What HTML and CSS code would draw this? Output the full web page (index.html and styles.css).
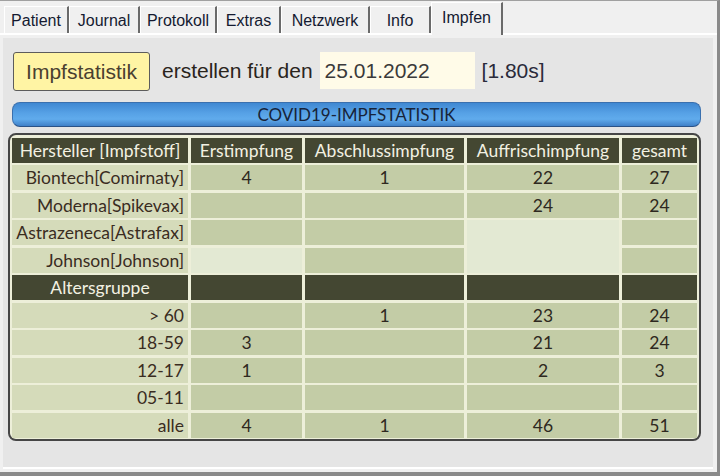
FILE: index.html
```html
<!DOCTYPE html>
<html lang="de">
<head>
<meta charset="utf-8">
<title>Impfen</title>
<link rel="stylesheet" href="styles.css">
</head>
<body>
<div class="window">
  <div class="tabbar">
    <div class="tab w-patient">Patient</div>
    <div class="tab w-journal">Journal</div>
    <div class="tab w-protokoll">Protokoll</div>
    <div class="tab w-extras">Extras</div>
    <div class="tab w-netzwerk">Netzwerk</div>
    <div class="tab w-info">Info</div>
    <div class="tab tab-active w-impfen">Impfen</div>
  </div>
  <div class="page">
    <div class="panel">
      <div class="toolbar">
        <div class="btn">Impfstatistik</div>
        <div class="label">erstellen für den</div>
        <div class="date">25.01.2022</div>
        <div class="time">[1.80s]</div>
      </div>
      <div class="titlebar">COVID19-IMPFSTATISTIK</div>
      <div class="frame">
        <div class="grid">
          <div class="c h">Hersteller [Impfstoff]</div>
          <div class="c h">Erstimpfung</div>
          <div class="c h">Abschlussimpfung</div>
          <div class="c h">Auffrischimpfung</div>
          <div class="c h">gesamt</div>

          <div class="c l">Biontech[Comirnaty]</div>
          <div class="c d">4</div>
          <div class="c d">1</div>
          <div class="c d">22</div>
          <div class="c d">27</div>

          <div class="c l">Moderna[Spikevax]</div>
          <div class="c d"></div>
          <div class="c d"></div>
          <div class="c d">24</div>
          <div class="c d">24</div>

          <div class="c l">Astrazeneca[Astrafax]</div>
          <div class="c d"></div>
          <div class="c d"></div>
          <div class="c e span2"></div>
          <div class="c d"></div>

          <div class="c l">Johnson[Johnson]</div>
          <div class="c e"></div>
          <div class="c d"></div>
          <div class="c d"></div>

          <div class="c h">Altersgruppe</div>
          <div class="c h"></div>
          <div class="c h"></div>
          <div class="c h"></div>
          <div class="c h"></div>

          <div class="c l">&gt; 60</div>
          <div class="c d"></div>
          <div class="c d">1</div>
          <div class="c d">23</div>
          <div class="c d">24</div>

          <div class="c l">18-59</div>
          <div class="c d">3</div>
          <div class="c d"></div>
          <div class="c d">21</div>
          <div class="c d">24</div>

          <div class="c l">12-17</div>
          <div class="c d">1</div>
          <div class="c d"></div>
          <div class="c d">2</div>
          <div class="c d">3</div>

          <div class="c l">05-11</div>
          <div class="c d"></div>
          <div class="c d"></div>
          <div class="c d"></div>
          <div class="c d"></div>

          <div class="c l">alle</div>
          <div class="c d">4</div>
          <div class="c d">1</div>
          <div class="c d">46</div>
          <div class="c d">51</div>
        </div>
      </div>
    </div>
  </div>
</div>
</body>
</html>
```

FILE: styles.css
```css
html, body {
  margin: 0;
  padding: 0;
}

body {
  width: 720px;
  height: 476px;
  overflow: hidden;
  background: #f0f0f0;
  font-family: "Liberation Sans", Arial, sans-serif;
}

.window {
  box-sizing: border-box;
  width: 720px;
  height: 476px;
  border-top: 1px solid #a0a0a0;
  border-right: 3px solid #8a8a8a;
  border-bottom: 4px solid #8a8a8a;
  background: #f0f0f0;
  display: flex;
  flex-direction: column;
}

/* ---------- tabs ---------- */
.tabbar {
  height: 32px;
  display: flex;
  align-items: flex-end;
  padding-left: 4px;
  flex: none;
}

.tab {
  box-sizing: border-box;
  height: 27px;
  background: #f0f0f0;
  border-top: 1px solid #ffffff;
  border-left: 1px solid #ffffff;
  border-right: 2px solid #6a6a6a;
  display: flex;
  align-items: center;
  justify-content: center;
  font-size: 16px;
  color: #141a30;
  padding-top: 1px;
}

.tab-active {
  position: relative;
  z-index: 1;
  height: 33px;
  margin-bottom: -2px;
  padding-bottom: 3px;
  padding-top: 0;
}

.w-patient { width: 65px; }
.w-journal { width: 71px; }
.w-protokoll { width: 77px; }
.w-extras { width: 64px; }
.w-netzwerk { width: 89px; }
.w-info { width: 61px; }
.w-impfen { width: 72px; }

/* ---------- page ---------- */
.page {
  flex: 1;
  border-top: 2px solid #ffffff;
  padding: 3px 4px 0 3px;
}

.panel {
  box-sizing: border-box;
  height: 431px;
  background: #e5e5e5;
  border-bottom: 2px solid #ffffff;
  padding: 14px 12px 0 5px;
}

.toolbar {
  display: flex;
  align-items: flex-start;
  padding-left: 5px;
  height: 39px;
}

.btn {
  box-sizing: border-box;
  width: 137px;
  height: 39px;
  background: #fff4a4;
  border: 1px solid #5c5c5c;
  border-radius: 3px;
  display: flex;
  align-items: center;
  justify-content: center;
  font-size: 21px;
  color: #4a4030;
}

.label {
  margin-left: 12px;
  height: 39px;
  line-height: 38px;
  font-size: 21px;
  color: #2a241c;
}

.date {
  box-sizing: border-box;
  margin-left: 7px;
  width: 155px;
  height: 37px;
  line-height: 37px;
  padding-left: 5px;
  background: #fffbe8;
  font-size: 21px;
  color: #3a3a3a;
}

.time {
  margin-left: 7px;
  height: 39px;
  line-height: 38px;
  font-size: 21px;
  color: #2a2a3a;
}

/* ---------- title bar ---------- */
.titlebar {
  box-sizing: border-box;
  margin: 11px 0 0 4px;
  height: 25px;
  border: 1px solid #3a70ae;
  border-bottom-color: #2a5286;
  border-radius: 8px;
  background: linear-gradient(#3f88d2 0%, #57a2e6 45%, #60abec 70%, #3f80c8 100%);
  text-align: center;
  line-height: 23px;
  font-family: Lato, "Liberation Sans", sans-serif;
  font-size: 17px;
  color: #17243a;
}

/* ---------- table ---------- */
.frame {
  margin-top: 6px;
  border: 2px solid #464646;
  border-radius: 8px;
  background: #edefd9;
  padding: 2.5px 2px 1.5px 2px;
}

.grid {
  display: grid;
  grid-template-columns: 176px 111px 159px 152px 75px;
  grid-auto-rows: 25px;
  column-gap: 3px;
  row-gap: 2.5px;
  font-family: Lato, "Liberation Sans", sans-serif;
  font-size: 17.5px;
}

.c {
  line-height: 25px;
  white-space: nowrap;
  text-align: center;
  color: #2e2820;
}

.h {
  background: #444732;
  color: #f3f1e2;
}

.l {
  background: #d5dbba;
  text-align: right;
  padding-right: 4px;
  color: #3a2c1f;
}

.d {
  background: #c3cca6;
}

.e {
  background: #e3e9d3;
}

.span2 {
  grid-row: span 2;
}
```
